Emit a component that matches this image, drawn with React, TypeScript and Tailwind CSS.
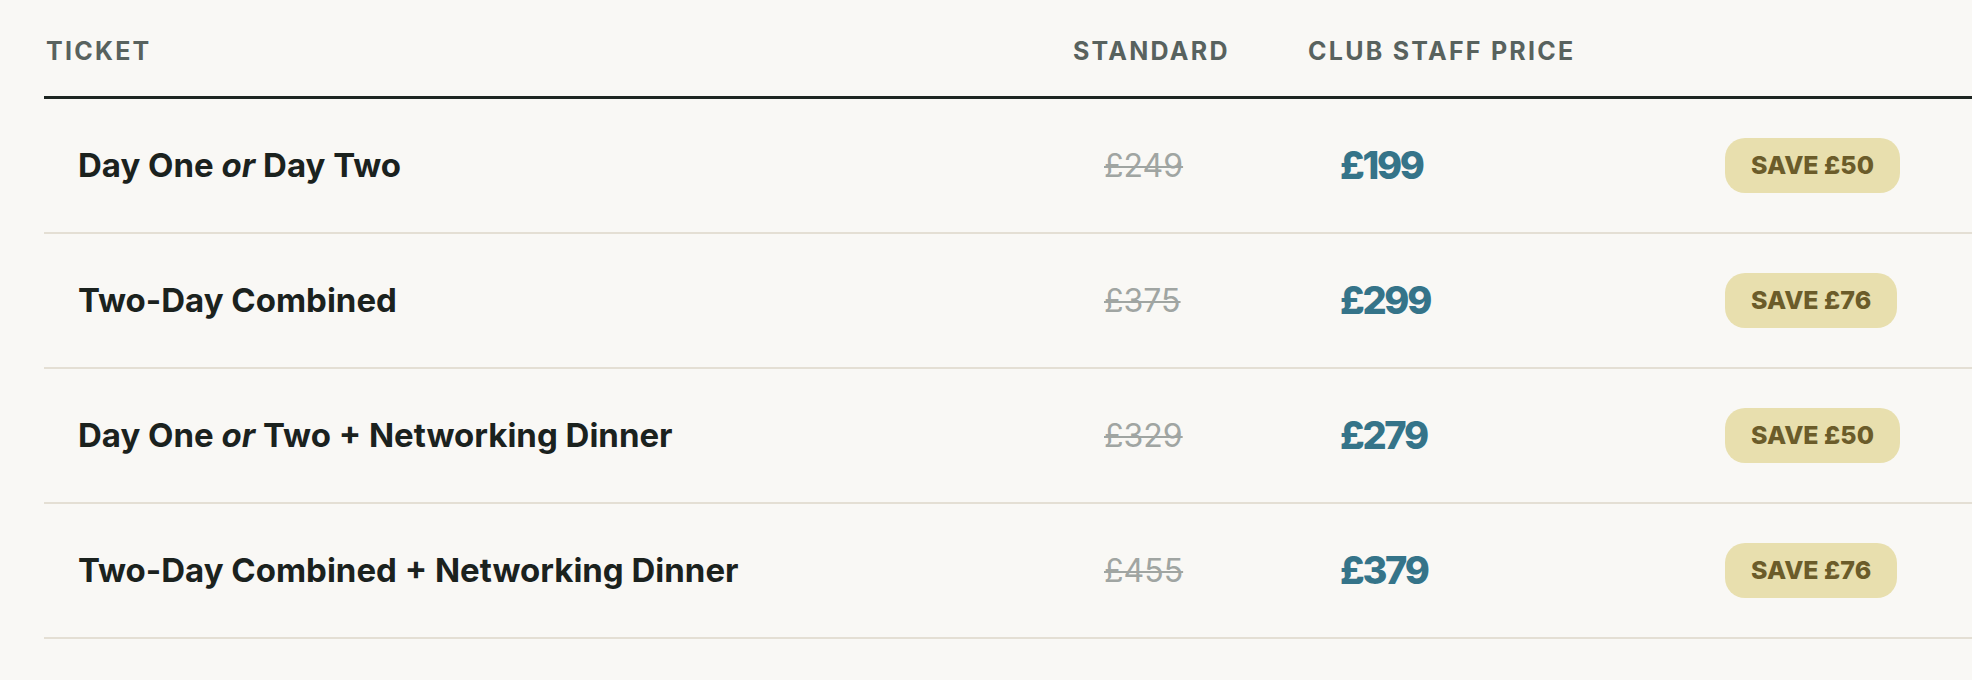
import React from "react";

const rows = [
  { name: <>Day One <em className="italic">or</em> Day Two</>, std: "£249", club: "£199", save: "SAVE £50" },
  { name: <>Two-Day Combined</>, std: "£375", club: "£299", save: "SAVE £76" },
  { name: <>Day One <em className="italic">or</em> Two + Networking Dinner</>, std: "£329", club: "£279", save: "SAVE £50" },
  { name: <>Two-Day Combined + Networking Dinner</>, std: "£455", club: "£379", save: "SAVE £76" },
];

const font = { fontFamily: "Inter, 'Noto Sans', sans-serif" };

export default function App() {
  return (
    <div className="w-full h-[680px] bg-[#f9f8f5] overflow-hidden" style={font}>
      <div className="ml-[44px]">
        <div className="grid grid-cols-[1027px_235px_385px_1fr] h-[99px] border-b-[3px] border-[#1d2521] text-[25px] font-bold tracking-[0.09em] text-[#58625e] uppercase">
          <div className="flex items-center pl-[2px] pt-[8px]">Ticket</div>
          <div className="flex items-center pl-[2px] pt-[8px]">Standard</div>
          <div className="flex items-center pl-[2px] pt-[8px]">Club Staff Price</div>
          <div />
        </div>
        {rows.map((r, i) => (
          <div key={i} className="grid grid-cols-[1027px_235px_385px_1fr] h-[135px] border-b-2 border-[#e4dfd4] items-center">
            <div className="pl-[34px] text-[33px] font-bold text-[#1b221e]">{r.name}</div>
            <div className="pl-[33px] text-[32px] font-normal text-[#a0a5a2] line-through decoration-2">{r.std}</div>
            <div className="pl-[34px] text-[38px] font-extrabold text-[#357489] tracking-[-0.06em]">{r.club}</div>
            <div className="pl-[34px]">
              <span className="inline-flex items-center h-[55px] px-[26px] rounded-[20px] bg-[#e8dfae] text-[25px] font-extrabold text-[#6b5c2a]">{r.save}</span>
            </div>
          </div>
        ))}
      </div>
    </div>
  );
}
